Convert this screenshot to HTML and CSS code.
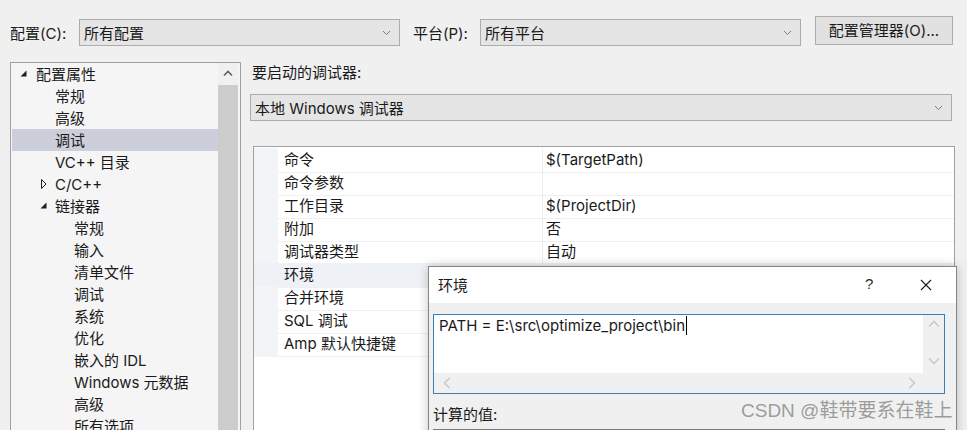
FILE: index.html
```html
<!DOCTYPE html>
<html lang="zh-CN">
<head>
<meta charset="utf-8">
<title>调试属性</title>
<link rel="stylesheet" href="styles.css">
</head>
<body>
<div class="page">
  <div class="toolbar">
    <span class="tlabel">配置(C):</span>
    <div class="combo combo-cfg"><span>所有配置</span><svg class="chev" width="9" height="6" viewBox="0 0 9 6"><polyline points="1,1 4.5,4.5 8,1" fill="none" stroke="#7a7a7a" stroke-width="1"/></svg></div>
    <span class="tlabel tlabel-plat">平台(P):</span>
    <div class="combo combo-plat"><span>所有平台</span><svg class="chev" width="9" height="6" viewBox="0 0 9 6"><polyline points="1,1 4.5,4.5 8,1" fill="none" stroke="#7a7a7a" stroke-width="1"/></svg></div>
    <div class="btn">配置管理器(O)...</div>
  </div>

  <div class="main">
    <div class="tree">
      <ul class="tree-list">
        <li class="ti l1"><svg class="exp" width="7" height="7" viewBox="0 0 7 7"><polygon points="6.5,0.5 6.5,6.5 0.5,6.5" fill="#1e1e1e"/></svg>配置属性</li>
        <li class="ti l2">常规</li>
        <li class="ti l2">高级</li>
        <li class="ti l2 sel">调试</li>
        <li class="ti l2">VC++ 目录</li>
        <li class="ti l2"><svg class="col" width="6" height="10" viewBox="0 0 6 10"><polygon points="0.5,0.5 5,5 0.5,9.5" fill="none" stroke="#1e1e1e" stroke-width="1"/></svg>C/C++</li>
        <li class="ti l2"><svg class="exp2" width="7" height="7" viewBox="0 0 7 7"><polygon points="6.5,0.5 6.5,6.5 0.5,6.5" fill="#1e1e1e"/></svg>链接器</li>
        <li class="ti l3">常规</li>
        <li class="ti l3">输入</li>
        <li class="ti l3">清单文件</li>
        <li class="ti l3">调试</li>
        <li class="ti l3">系统</li>
        <li class="ti l3">优化</li>
        <li class="ti l3">嵌入的 IDL</li>
        <li class="ti l3">Windows 元数据</li>
        <li class="ti l3">高级</li>
        <li class="ti l3">所有选项</li>
      </ul>
      <div class="vscroll">
        <div class="vs-arrow"><svg width="10" height="7" viewBox="0 0 10 7"><polyline points="1,5.5 5,1.5 9,5.5" fill="none" stroke="#606060" stroke-width="1.6"/></svg></div>
        <div class="vs-thumb"></div>
      </div>
    </div>

    <div class="right">
      <div class="rlabel">要启动的调试器:</div>
      <div class="combo combo-dbg"><span>本地 Windows 调试器</span><svg class="chev" width="9" height="6" viewBox="0 0 9 6"><polyline points="1,1 4.5,4.5 8,1" fill="none" stroke="#7a7a7a" stroke-width="1"/></svg></div>
      <div class="pgrid">
        <div class="prow"><div class="gut"></div><div class="pname">命令</div><div class="pval">$(TargetPath)</div></div>
        <div class="prow"><div class="gut"></div><div class="pname">命令参数</div><div class="pval"></div></div>
        <div class="prow"><div class="gut"></div><div class="pname">工作目录</div><div class="pval">$(ProjectDir)</div></div>
        <div class="prow"><div class="gut"></div><div class="pname">附加</div><div class="pval">否</div></div>
        <div class="prow"><div class="gut"></div><div class="pname">调试器类型</div><div class="pval">自动</div></div>
        <div class="prow hl"><div class="gut"></div><div class="pname">环境</div><div class="pval"></div></div>
        <div class="prow"><div class="gut"></div><div class="pname">合并环境</div><div class="pval"></div></div>
        <div class="prow"><div class="gut"></div><div class="pname">SQL 调试</div><div class="pval"></div></div>
        <div class="prow"><div class="gut"></div><div class="pname">Amp 默认快捷键</div><div class="pval"></div></div>
      </div>
    </div>
  </div>

  <div class="dialog">
    <div class="dlg-title">
      <span class="dlg-name">环境</span>
      <span class="dlg-help">?</span>
      <svg class="dlg-close" width="12" height="12" viewBox="0 0 12 12"><path d="M1 1 L11 11 M11 1 L1 11" stroke="#1a1a1a" stroke-width="1.1"/></svg>
    </div>
    <div class="dlg-body">
      <div class="tbox">
        <div class="tb-text">PATH = E:\src\optimize_project\bin<span class="caret"></span></div>
        <div class="tb-vs">
          <svg width="12" height="8" viewBox="0 0 12 8"><polyline points="1,6.5 6,1.5 11,6.5" fill="none" stroke="#c6c6c6" stroke-width="1.4"/></svg>
          <svg width="12" height="8" viewBox="0 0 12 8"><polyline points="1,1.5 6,6.5 11,1.5" fill="none" stroke="#c6c6c6" stroke-width="1.4"/></svg>
        </div>
        <div class="tb-hs">
          <svg width="8" height="12" viewBox="0 0 8 12"><polyline points="6.5,1 1.5,6 6.5,11" fill="none" stroke="#c6c6c6" stroke-width="1.4"/></svg>
          <svg width="8" height="12" viewBox="0 0 8 12"><polyline points="1.5,1 6.5,6 1.5,11" fill="none" stroke="#c6c6c6" stroke-width="1.4"/></svg>
        </div>
        <div class="tb-corner"></div>
      </div>
      <div class="calc">计算的值:</div>
      <div class="tbox2"></div>
    </div>
  </div>

  <div class="watermark">CSDN @鞋带要系在鞋上</div>
</div>
</body>
</html>
```

FILE: styles.css
```css
* { box-sizing: border-box; }
html, body { margin: 0; padding: 0; }
body {
  background: #f0f0f0;
  font-family: "Inter", "Noto Sans CJK SC", sans-serif;
  font-size: 15px;
  color: #1a1a1a;
  width: 967px;
  height: 430px;
  overflow: hidden;
}
.page { position: relative; width: 967px; height: 430px; overflow: hidden; }

/* toolbar */
.toolbar {
  display: flex;
  align-items: flex-start;
  padding: 16px 0 0 10px;
  height: 45px;
}
.tlabel { line-height: 29px; margin-top: 3px; width: 69px; white-space: nowrap; }
.tlabel-plat { margin-left: 13px; width: 67px; }
.combo {
  position: relative;
  height: 27px;
  background: #e5e5e5;
  border: 1px solid #acacac;
  line-height: 27px;
  padding-left: 4px;
  white-space: nowrap;
}
.combo .chev { position: absolute; right: 8px; top: 10px; }
.combo-cfg { width: 321px; margin-top: 3px; }
.combo-plat { width: 321px; margin-top: 3px; }
.btn {
  margin-left: 14px;
  width: 138px;
  height: 29px;
  background: #e1e1e1;
  border: 1px solid #adadad;
  text-align: center;
  line-height: 28px;
  white-space: nowrap;
}

/* main */
.main { display: flex; margin-top: 17px; }
.tree {
  margin-left: 10px;
  width: 231px;
  height: 400px;
  border: 1px solid #a0a0a0;
  background: #f5f5f5;
  display: flex;
}
.tree-list {
  list-style: none;
  margin: 0;
  padding: 0 0 0 1px;
  width: 207px;
}
.ti {
  position: relative;
  height: 22px;
  line-height: 24px;
  white-space: nowrap;
}
.ti.l1 { padding-left: 24px; }
.ti.l2 { padding-left: 43px; }
.ti.l3 { padding-left: 62px; }
.ti.sel { background: #cccedb; }
.ti .exp { position: absolute; left: 8px; top: 7px; }
.ti .exp2 { position: absolute; left: 28px; top: 7px; }
.ti .col { position: absolute; left: 29px; top: 6px; }
.vscroll {
  width: 20px;
  margin-right: 1px;
  display: flex;
  flex-direction: column;
}
.vs-arrow {
  height: 22px;
  display: flex;
  align-items: center;
  justify-content: center;
  background: #f0f0f0;
}
.vs-arrow svg { margin-top: -2px; }
.vs-thumb { flex: 1; background: #cdcdcd; }

.right { margin-left: 9px; width: 704px; }
.rlabel { line-height: 22px; height: 20px; padding-left: 2px; }
.combo-dbg { width: 702px; margin-top: 12px; }
.pgrid {
  margin: 25px 0 0 3px;
  width: 702px;
  height: 400px;
  border: 1px solid #a0a0a0;
  border-bottom: none;
  background: #ffffff;
  padding-top: 1px;
}
.prow {
  display: grid;
  grid-template-columns: 24px 265px 1fr;
  height: 23px;
  line-height: 24px;
}
.prow .gut { background: #f3f4f8; }
.prow .pname {
  padding-left: 6px;
  border-bottom: 1px solid #f0f0f0;
  border-right: 1px solid #ececec;
  white-space: nowrap;
}
.prow .pval {
  padding-left: 3px;
  border-bottom: 1px solid #f0f0f0;
  white-space: nowrap;
}
.prow.hl .gut, .prow.hl .pname, .prow.hl .pval { background: #eef1f6; }

/* dialog */
.dialog {
  position: absolute;
  left: 428px;
  top: 266px;
  width: 529px;
  height: 200px;
  background: #f0f0f0;
  border: 1px solid #858585;
  box-shadow: 0 0 10px rgba(0, 0, 0, 0.22);
}
.dlg-title {
  position: relative;
  height: 36px;
  background: #ffffff;
  display: flex;
  align-items: center;
  padding-left: 9px;
}
.dlg-name { line-height: 33px; }
.dlg-help { position: absolute; left: 436px; top: 8px; font-size: 15px; color: #2a2a2a; font-family: "Liberation Sans", sans-serif; }
.dlg-close { position: absolute; left: 491px; top: 12px; }
.dlg-body { padding: 11px 0 0 4px; }
.tbox {
  width: 512px;
  height: 80px;
  border: 1px solid #3c7fb5;
  background: #f0f0f0;
  display: grid;
  grid-template-columns: 1fr 21px;
  grid-template-rows: 58px 20px;
}
.tb-text {
  background: #ffffff;
  padding: 0 0 0 5px;
  line-height: 22px;
  white-space: nowrap;
}
.caret {
  display: inline-block;
  width: 1px;
  height: 19px;
  background: #000;
  vertical-align: -4px;
  margin-left: 1px;
}
.tb-vs {
  display: flex;
  flex-direction: column;
  align-items: center;
  justify-content: space-between;
  padding: 5px 0 8px;
}
.tb-hs {
  display: flex;
  align-items: center;
  justify-content: space-between;
  padding: 0 7px 0 9px;
}
.tb-corner { background: #f0f0f0; }
.calc { margin-top: 9px; line-height: 24px; }
.tbox2 {
  margin-top: 2px;
  width: 512px;
  height: 60px;
  border: 1px solid #7a7a7a;
  background: #f0f0f0;
}

.watermark {
  position: absolute;
  left: 741px;
  top: 398px;
  font-family: "Liberation Sans", "Noto Sans CJK SC", sans-serif;
  font-size: 19px;
  line-height: 26px;
  color: rgba(140, 140, 140, 0.85);
  white-space: nowrap;
}
```
